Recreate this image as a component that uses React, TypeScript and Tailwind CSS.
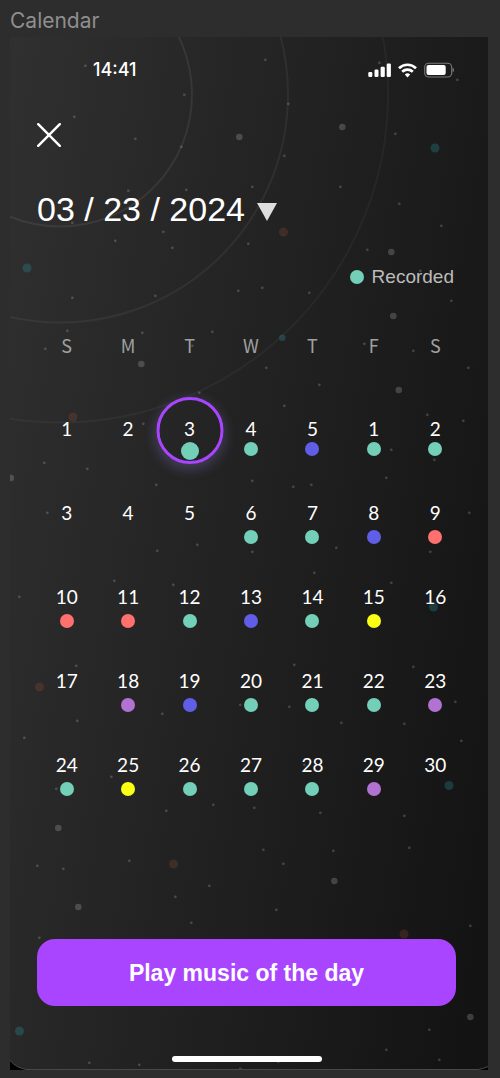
import React, { useState } from "react";

type Mood = "teal" | "indigo" | "coral" | "yellow" | "orchid";
type Day = { label: number; mood?: Mood };
type Point = [number, number];

const moodClass: Record<Mood, string> = {
  teal: "bg-[#74cfb9]",
  indigo: "bg-[#605ee6]",
  coral: "bg-[#ff706f]",
  yellow: "bg-[#fbff14]",
  orchid: "bg-[#b172d1]",
};

const weekdays = ["S", "M", "T", "W", "T", "F", "S"];

const weeks: Day[][] = [
  [
    { label: 1 },
    { label: 2 },
    { label: 3, mood: "teal" },
    { label: 4, mood: "teal" },
    { label: 5, mood: "indigo" },
    { label: 1, mood: "teal" },
    { label: 2, mood: "teal" },
  ],
  [
    { label: 3 },
    { label: 4 },
    { label: 5 },
    { label: 6, mood: "teal" },
    { label: 7, mood: "teal" },
    { label: 8, mood: "indigo" },
    { label: 9, mood: "coral" },
  ],
  [
    { label: 10, mood: "coral" },
    { label: 11, mood: "coral" },
    { label: 12, mood: "teal" },
    { label: 13, mood: "indigo" },
    { label: 14, mood: "teal" },
    { label: 15, mood: "yellow" },
    { label: 16 },
  ],
  [
    { label: 17 },
    { label: 18, mood: "orchid" },
    { label: 19, mood: "indigo" },
    { label: 20, mood: "teal" },
    { label: 21, mood: "teal" },
    { label: 22, mood: "teal" },
    { label: 23, mood: "orchid" },
  ],
  [
    { label: 24, mood: "teal" },
    { label: 25, mood: "yellow" },
    { label: 26, mood: "teal" },
    { label: 27, mood: "teal" },
    { label: 28, mood: "teal" },
    { label: 29, mood: "orchid" },
    { label: 30 },
  ],
];

const stars: Point[] = [
  [85, 66], [184, 95], [74, 117], [135, 139], [181, 147], [265, 60], [288, 104], [284, 156],
  [379, 63], [457, 80], [395, 134], [128, 191], [186, 190], [115, 241], [163, 232], [172, 248],
  [248, 244], [72, 223], [72, 298], [155, 296], [238, 291], [67, 331], [142, 333], [212, 332],
  [45, 349], [192, 346], [252, 187], [340, 187], [399, 204], [441, 226], [367, 250], [420, 271],
  [262, 288], [309, 293], [451, 301], [364, 344], [413, 351], [266, 368], [468, 368], [199, 393],
  [143, 424], [44, 463], [87, 469], [156, 485], [47, 513], [197, 545], [157, 551], [319, 385],
  [284, 406], [427, 415], [463, 421], [391, 450], [434, 460], [252, 481], [386, 478], [293, 487],
  [311, 485], [469, 513], [336, 548], [252, 552], [430, 552], [114, 581], [173, 585], [19, 597],
  [76, 666], [77, 721], [162, 714], [24, 738], [111, 777], [56, 789], [213, 805], [240, 705],
  [314, 573], [391, 583], [294, 665], [413, 667], [289, 707], [455, 702], [341, 723], [404, 724],
  [461, 741], [304, 765], [254, 808], [166, 811], [37, 866], [63, 869], [129, 861], [209, 886],
  [175, 897], [191, 923], [39, 938], [89, 1063], [139, 1065], [240, 1069], [320, 813], [404, 816],
  [263, 850], [333, 851], [409, 848], [283, 864], [276, 910], [470, 926], [429, 1030], [386, 1050],
  [439, 1060], [278, 1062],
];

const moons: Point[] = [
  [239, 137], [342, 127], [141, 364], [391, 252], [393, 316], [10.5, 478], [398.5, 390],
  [58, 828], [78, 907], [334, 881], [470, 1017],
];

const tealPlanets: Point[] = [[435, 148], [27, 268], [433.5, 607], [449, 785.5], [19.5, 1031]];
const rustPlanets: Point[] = [[283, 232], [72.5, 417], [39, 687], [173, 864], [403.5, 934]];

function NightSky() {
  return (
    <svg
      aria-hidden="true"
      className="absolute inset-0 h-full w-full"
      viewBox="10 37 478 1034"
      preserveAspectRatio="xMidYMid slice"
    >
      <g fill="none" stroke="#fff" strokeWidth="2">
        <circle cx="60" cy="95" r="132" strokeOpacity="0.07" />
        <circle cx="60" cy="95" r="228" strokeOpacity="0.055" />
        <circle cx="60" cy="95" r="328" strokeOpacity="0.04" />
      </g>
      <g fill="#fff" fillOpacity="0.18">
        {stars.map(([x, y]) => (
          <circle key={`${x}-${y}`} cx={x + 0.3} cy={y + 0.3} r="1.4" />
        ))}
        {moons.map(([x, y]) => (
          <circle key={`${x}-${y}`} cx={x + 0.3} cy={y + 0.5} r="3.3" />
        ))}
      </g>
      <g fill="#2ba0ad" fillOpacity="0.27">
        {tealPlanets.map(([x, y]) => (
          <circle key={`${x}-${y}`} cx={x} cy={y + 0.5} r="4.5" />
        ))}
        <circle cx="282.3" cy="338.3" r="3.3" />
      </g>
      <g fill="#b0563a" fillOpacity="0.22">
        {rustPlanets.map(([x, y]) => (
          <circle key={`${x}-${y}`} cx={x + 0.5} cy={y + 0.5} r="4.5" />
        ))}
      </g>
      <path d="M10 1061q7 8 17 9.500H10z" fill="#000" />
      <path d="M488 1067q-4 2-9 3.500h9z" fill="#000" />
      <path d="M10 1061q7 8 17 9H478q6-1 10-3" fill="none" stroke="#484848" />
    </svg>
  );
}

function StatusIcons() {
  return (
    <svg width="86" height="16" viewBox="0 0 86 16" fill="#fff" role="img" aria-label="Signal, Wi-Fi and battery">
      <rect x="0.300" y="10" width="4" height="5" rx="1.200" />
      <rect x="6.500" y="7.600" width="4" height="7.400" rx="1.200" />
      <rect x="12.600" y="4.800" width="4.200" height="10.200" rx="1.200" />
      <rect x="18.700" y="1.600" width="4.200" height="13.400" rx="1.200" />
      <g fill="none" stroke="#fff" strokeWidth="2.700">
        <path d="M31 6.200a12.200 12.200 0 0 1 17 0" />
        <path d="M34.200 9.700a7.700 7.700 0 0 1 10.600 0" />
      </g>
      <path d="M39.500 15.400l-2.700-2.900a3.900 3.900 0 0 1 5.400 0z" />
      <rect x="56.700" y="1.200" width="27" height="13.800" rx="4" fill="none" stroke="#7a7a7a" strokeWidth="1.100" />
      <rect x="58.500" y="3.100" width="19.200" height="10" rx="2" />
      <path d="M84.800 6q1.300.7 1.200 2.100t-1.200 2z" fill="#7a7a7a" stroke="#7a7a7a" strokeWidth="0.400" />
    </svg>
  );
}

export default function App() {
  const [selected, setSelected] = useState("0-2");

  return (
    <div className="min-h-screen bg-[#2d2d2d] pr-3 pb-2 pl-2.5 font-['Liberation_Sans',sans-serif]">
      <p className="h-[37px] pt-[9px] font-['Inter',sans-serif] text-[21px] leading-6 text-[#8f8f8f]">Calendar</p>

      <main className="relative isolate flex flex-col overflow-hidden bg-linear-[100deg,#303030,#121212] pb-2 text-white">
        <div className="absolute inset-0 -z-10">
          <NightSky />
        </div>

        <div className="flex h-[66px] items-center justify-between pr-[34px] pl-[83px]">
          <time className="font-['Inter',sans-serif] text-[18px] leading-5 font-medium">14:41</time>
          <StatusIcons />
        </div>

        <header className="mt-5 flex flex-col items-start pr-[34px] pl-[27px]">
          <button type="button" aria-label="Close">
            <svg className="block" width="24" height="24" viewBox="0 0 24 24" fill="none" stroke="#fff" strokeWidth="2.400" strokeLinecap="round">
              <path d="M1.200 1.200l21.600 21.600M22.800 1.200L1.200 22.800" />
            </svg>
          </button>
          <button type="button" aria-haspopup="dialog" className="mt-[42px] flex items-baseline gap-3 text-[34px] leading-10 whitespace-nowrap">
            03 / 23 / 2024
            <svg width="20" height="18" viewBox="0 0 20 18" fill="#dedede" aria-hidden="true">
              <path d="M0 0h20L10 18z" />
            </svg>
          </button>
          <p className="mt-9 flex items-center gap-2 self-end text-[19px] leading-6 text-[#bcbcbc]">
            <span className="size-3.5 rounded-full bg-[#74cfb9]" />
            Recorded
          </p>
        </header>

        <section aria-label="March 2024" className="mt-[46px] pr-[22px] pl-[26px] font-['Lato',sans-serif] text-[19px] leading-5">
          <table className="w-full table-fixed border-collapse">
            <thead>
              <tr className="h-[84px] align-top text-[#a0a0a0]">
                {weekdays.map((name, i) => (
                  <th key={i} scope="col" className="p-0 font-['Noto_Sans_CJK_SC',sans-serif] text-[18px] font-normal">
                    {name}
                  </th>
                ))}
              </tr>
            </thead>
            <tbody>
              {weeks.map((week, row) => (
                <tr key={row} className="h-[84px] align-top">
                  {week.map((day, col) => {
                    const id = `${row}-${col}`;
                    const active = id === selected;
                    return (
                      <td key={id} className="p-0">
                        <button
                          type="button"
                          aria-pressed={active}
                          onClick={() => setSelected(id)}
                          className={`relative flex w-full flex-col items-center ${row === 0 ? "gap-[3px]" : "gap-[7px]"}`}
                        >
                          {active && (
                            <span className="absolute -top-[22px] left-1/2 size-[67px] -translate-x-1/2 rounded-full border-3 border-[#a846ff] shadow-[0_4px_12px_2px_rgba(140,120,210,0.3)]" />
                          )}
                          <span>{day.label}</span>
                          {day.mood && (
                            <span className={`rounded-full ${active ? "size-[18px]" : "size-3.5"} ${moodClass[day.mood]}`} />
                          )}
                        </button>
                      </td>
                    );
                  })}
                </tr>
              ))}
            </tbody>
          </table>
        </section>

        <footer className="mt-[100px] flex flex-col items-center pr-[32px] pl-[27px]">
          <button type="button" className="h-[67px] w-full rounded-[18px] bg-[#a945ff] text-[23px] leading-7 font-bold">
            Play music of the day
          </button>
          <span className="mt-[50px] h-1.5 w-[150px] rounded-full bg-white" />
        </footer>
      </main>
    </div>
  );
}
